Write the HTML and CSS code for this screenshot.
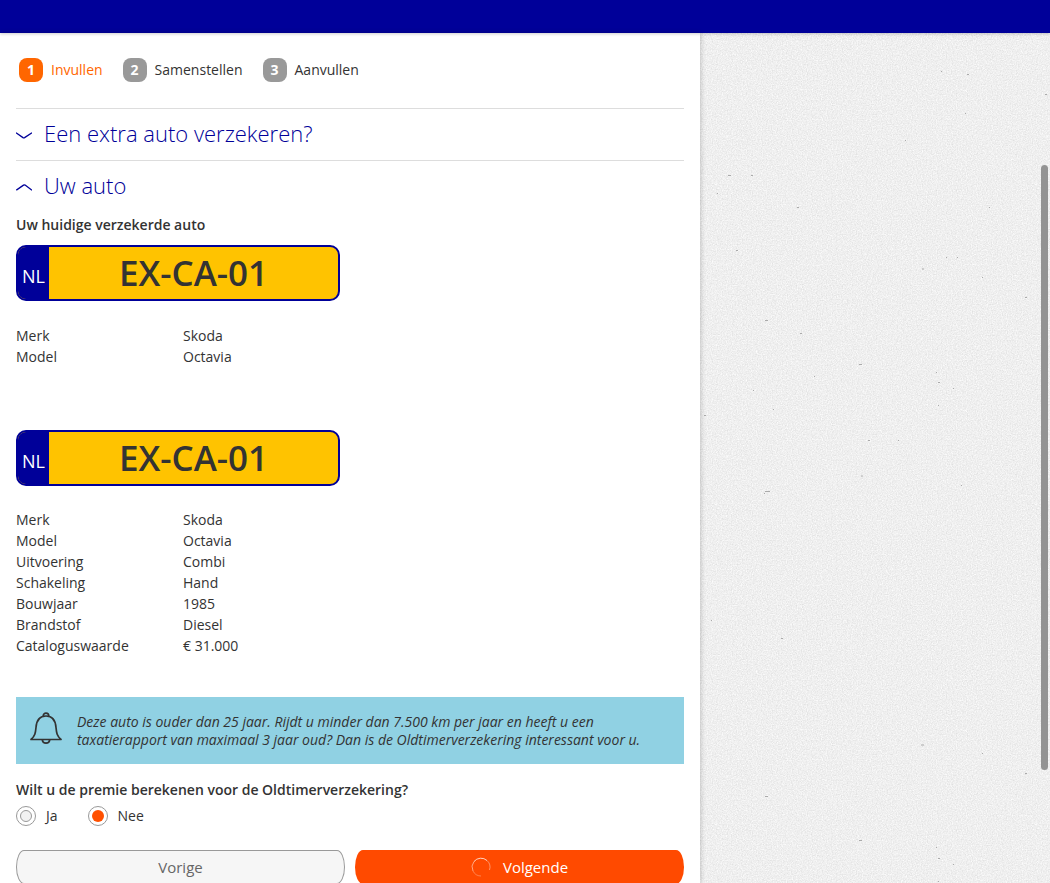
FILE: index.html
```html
<!DOCTYPE html>
<html lang="nl">
<head>
<meta charset="utf-8">
<meta name="viewport" content="width=device-width, initial-scale=1">
<title>Uw auto verzekeren</title>
<link rel="stylesheet" href="styles.css">
</head>
<body>
<div class="page">
  <header class="topbar"></header>
  <div class="layout">
    <main class="panel">
      <ol class="steps">
        <li class="step step-active"><span class="step-number">1</span><span class="step-name">Invullen</span></li>
        <li class="step"><span class="step-number">2</span><span class="step-name">Samenstellen</span></li>
        <li class="step"><span class="step-number">3</span><span class="step-name">Aanvullen</span></li>
      </ol>

      <section class="section">
        <h2 class="section-title">
          <button type="button" class="section-toggle" aria-expanded="false">
            <svg class="chevron" viewBox="0 0 16 8" aria-hidden="true"><path d="M0 1.700 L7 6.600 Q7.800 7.100 8.600 6.600 L16 1.700"/></svg>
            <span class="section-name">Een extra auto verzekeren?</span>
          </button>
        </h2>
      </section>

      <section class="section">
        <h2 class="section-title">
          <button type="button" class="section-toggle" aria-expanded="true">
            <svg class="chevron" viewBox="0 0 16 8" aria-hidden="true"><path d="M0.300 7.200 L7.500 2.100 Q8.300 1.600 9.100 2.100 L16 7.200"/></svg>
            <span class="section-name">Uw auto</span>
          </button>
        </h2>

        <h3 class="label">Uw huidige verzekerde auto</h3>
        <div class="plate"><span class="plate-country">NL</span><span class="plate-number">EX-CA-01</span></div>
        <dl class="details details-current">
          <dt>Merk</dt><dd>Skoda</dd>
          <dt>Model</dt><dd>Octavia</dd>
        </dl>

        <div class="plate"><span class="plate-country">NL</span><span class="plate-number">EX-CA-01</span></div>
        <dl class="details">
          <dt>Merk</dt><dd>Skoda</dd>
          <dt>Model</dt><dd>Octavia</dd>
          <dt>Uitvoering</dt><dd>Combi</dd>
          <dt>Schakeling</dt><dd>Hand</dd>
          <dt>Bouwjaar</dt><dd>1985</dd>
          <dt>Brandstof</dt><dd>Diesel</dd>
          <dt>Cataloguswaarde</dt><dd>€ 31.000</dd>
        </dl>

        <div class="notice">
          <svg class="bell" viewBox="0 0 32 32" aria-hidden="true">
            <path d="M13.200 4.200 C13.200 0.200 18.800 0.200 18.800 4.200"/>
            <path d="M1 27.500 C5 24 5.500 21 6 15.500 C6.500 8.500 9.500 4 16 4 C22.500 4 25.500 8.500 26 15.500 C26.500 21 27 24 31 27.500 Z"/>
            <path d="M12.300 27.800 C12.800 32.200 19.200 32.200 19.700 27.800"/>
          </svg>
          <p class="notice-text">Deze auto is ouder dan 25 jaar. Rijdt u minder dan 7.500 km per jaar en heeft u een <br>taxatierapport van maximaal 3 jaar oud? Dan is de Oldtimerverzekering interessant voor u.</p>
        </div>

        <form class="form">
          <fieldset class="question">
            <legend class="label">Wilt u de premie berekenen voor de Oldtimerverzekering?</legend>
            <div class="options">
              <label class="option"><input class="radio" type="radio" name="oldtimer" value="ja"><span>Ja</span></label>
              <label class="option"><input class="radio" type="radio" name="oldtimer" value="nee" checked><span>Nee</span></label>
            </div>
          </fieldset>
          <div class="actions">
            <button type="button" class="button button-secondary">Vorige</button>
            <button type="button" class="button button-primary">
              <svg class="spinner" viewBox="0 0 20 20" aria-hidden="true">
                <path opacity=".75" d="M3 4.500 A9 9 0 0 1 16 3.500"/>
                <path opacity=".4" d="M16 3.500 A9 9 0 0 1 18.500 13"/>
                <path opacity=".5" d="M3 4.500 A9 9 0 0 0 2 14"/>
                <path opacity=".3" d="M2 14 A9 9 0 0 0 10 19"/>
              </svg>
              <span>Volgende</span>
            </button>
          </div>
        </form>
      </section>
    </main>
    <aside class="backdrop">
      <svg class="paper" aria-hidden="true">
        <filter id="grain" x="0" y="0" width="100%" height="100%" color-interpolation-filters="sRGB">
          <feTurbulence type="fractalNoise" baseFrequency="0.8" numOctaves="3" seed="4"/>
          <feColorMatrix type="matrix" values="0.150 0 0 0 0.862  0.150 0 0 0 0.862  0.150 0 0 0 0.862  0 0 0 0 1"/>
        </filter>
        <rect width="100%" height="100%" filter="url(#grain)"/>
        <path class="specks" d="M28 142.500h3 M51 142.500h2 M205 107.500h1 M241 38.500h1 M267 41.500h2 M345 61.500h2 M265 80.500h1 M17 160.500h1 M97 174.500h2 M289 174.500h1 M36 217.500h2 M246 224.500h1 M257 224.500h1 M222 236h2 M282 244.500h1 M325 264.500h2 M65 287.500h3 M100 300.500h2 M159 331.500h3 M236 339.500h1 M238 349.500h2 M253 355.500h1 M238 372.500h1 M114 343.500h1 M53 357.500h1 M73 376.500h1 M4 382.500h2 M168 407.500h2 M198 407.500h1 M161 443h2 M65 458.500h5 M64 460.500h1 M261 452.500h1 M11 587.500h1 M81 605.500h2 M221 712h3 M282 720.500h1 M325 740.500h2 M65 763.500h3 M159 807.500h3 M236 814.500h1 M238 825.500h2 M253 831.500h1 M238 848.500h1"/>
      </svg>
    </aside>
    <div class="scroll-thumb"></div>
  </div>
</div>
</body>
</html>
```
FILE: styles.css
```css
* {
  box-sizing: border-box;
}

body {
  margin: 0;
  background: #fff;
  color: #333;
  font: 14px/21px "Open Sans", "Noto Sans", sans-serif;
}

.page {
  display: flex;
  flex-direction: column;
  height: 100vh;
}

.topbar {
  flex: none;
  height: 33px;
  background: #009;
  box-shadow: 0 1px 3px rgba(0, 0, 0, 0.2);
  z-index: 1;
}

.layout {
  position: relative;
  display: grid;
  grid-template-columns: 2fr 1fr;
  grid-template-rows: minmax(0, 1fr);
  flex: 1;
  min-height: 0;
}

.panel {
  padding: 0 16px;
  overflow-y: auto;
  scrollbar-width: none;
  box-shadow: 1px 0 5px rgba(0, 0, 0, 0.2);
  z-index: 1;
}

.backdrop {
  overflow: hidden;
  background: #efefef;
}

.paper {
  display: block;
  width: 100%;
  height: 100%;
}

.specks {
  stroke: #aaa;
  stroke-width: 1;
}

.scroll-thumb {
  position: absolute;
  top: 132px;
  right: 2px;
  width: 7px;
  height: 605px;
  border-radius: 4px;
  background: #939393;
}

.steps {
  display: flex;
  gap: 20px;
  margin: 0;
  padding: 25px 3px 26px;
  list-style: none;
}

.step {
  display: flex;
  align-items: center;
  gap: 8px;
}

.step-active {
  color: #f60;
}

.step-number {
  width: 24px;
  height: 24px;
  border-radius: 8px;
  background: #999;
  color: #fff;
  font-weight: 700;
  line-height: 24px;
  text-align: center;
}

.step-active .step-number {
  background: #f60;
}

.step-name {
  padding-bottom: 2px;
}

.section {
  border-top: 1px solid #ddd;
}

.section-title {
  margin: 0;
}

.section-toggle {
  display: flex;
  align-items: center;
  gap: 12px;
  width: 100%;
  height: 51px;
  padding: 0;
  border: 0;
  background: none;
  color: #009;
  font: 300 22px/30px "Open Sans", "Noto Sans", sans-serif;
  text-align: left;
  cursor: pointer;
}

.section-name {
  padding-bottom: 4px;
}

.chevron {
  width: 16px;
  height: 8px;
  fill: none;
  stroke: currentColor;
  stroke-width: 1.3;
}

.label {
  margin: 0;
  padding: 0;
  font-size: 14px;
  font-weight: 600;
  line-height: 21px;
}

.section .plate {
  margin-top: 10px;
}

.section h3.label {
  margin-top: 2px;
}

.plate {
  display: flex;
  max-width: 324px;
  height: 56px;
  overflow: hidden;
  border: 2px solid #009;
  border-radius: 10px;
  background: #ffc300;
}

.plate-country {
  width: 31px;
  padding-top: 4px;
  background: #009;
  color: #fff;
  font-size: 18px;
  line-height: 50px;
  text-align: center;
}

.plate-number {
  flex: 1;
  font-size: 35px;
  font-weight: 600;
  line-height: 52px;
  text-align: center;
}

.details {
  display: grid;
  grid-template-columns: 1fr 3fr;
  margin: 23px 0 41px;
}

.details dd {
  margin: 0;
}

.details-current {
  margin: 24px 0 63px;
}

.notice {
  display: flex;
  align-items: center;
  gap: 15px;
  min-height: 67px;
  padding: 0 14px;
  background: #90d1e3;
}

.bell {
  flex: none;
  width: 32px;
  height: 32px;
  margin-bottom: 6px;
  fill: none;
  stroke: #333;
  stroke-width: 1.7;
  stroke-linejoin: round;
}

.notice-text {
  margin: 0;
  font-size: 14px;
  font-style: italic;
  line-height: 18px;
}

.form {
  padding: 15px 0 32px;
}

.question {
  margin: 0;
  padding: 0;
  border: 0;
}

.options {
  display: flex;
  gap: 30px;
  padding-top: 5px;
}

.option {
  display: flex;
  align-items: center;
  gap: 10px;
}

.radio {
  display: grid;
  place-content: center;
  appearance: none;
  width: 20px;
  height: 20px;
  margin: 0;
  border: 1px solid #999;
  border-radius: 50%;
  background: #fff;
}

.radio::before {
  content: "";
  width: 10px;
  height: 10px;
  border: 1px solid #999;
  border-radius: 50%;
  background: #f2f2f2;
}

.radio:checked::before {
  width: 12px;
  height: 12px;
  border: 0;
  background: #ff5000;
}

.actions {
  display: grid;
  grid-template-columns: 1fr 1fr;
  gap: 10px;
  margin-top: 24px;
}

.button {
  display: flex;
  align-items: center;
  justify-content: center;
  gap: 12px;
  height: 34px;
  padding: 0;
  border: 0;
  border-radius: 8px / 17px;
  font: 15px/21px "Open Sans", "Noto Sans", sans-serif;
  cursor: pointer;
}

.button-secondary {
  border: 1px solid #999;
  background: #f6f6f6;
  color: #666;
}

.button-primary {
  background: #ff4a00;
  color: #fff;
}

.spinner {
  width: 20px;
  height: 20px;
  fill: none;
  stroke: #fff;
  stroke-width: 1;
}
```
